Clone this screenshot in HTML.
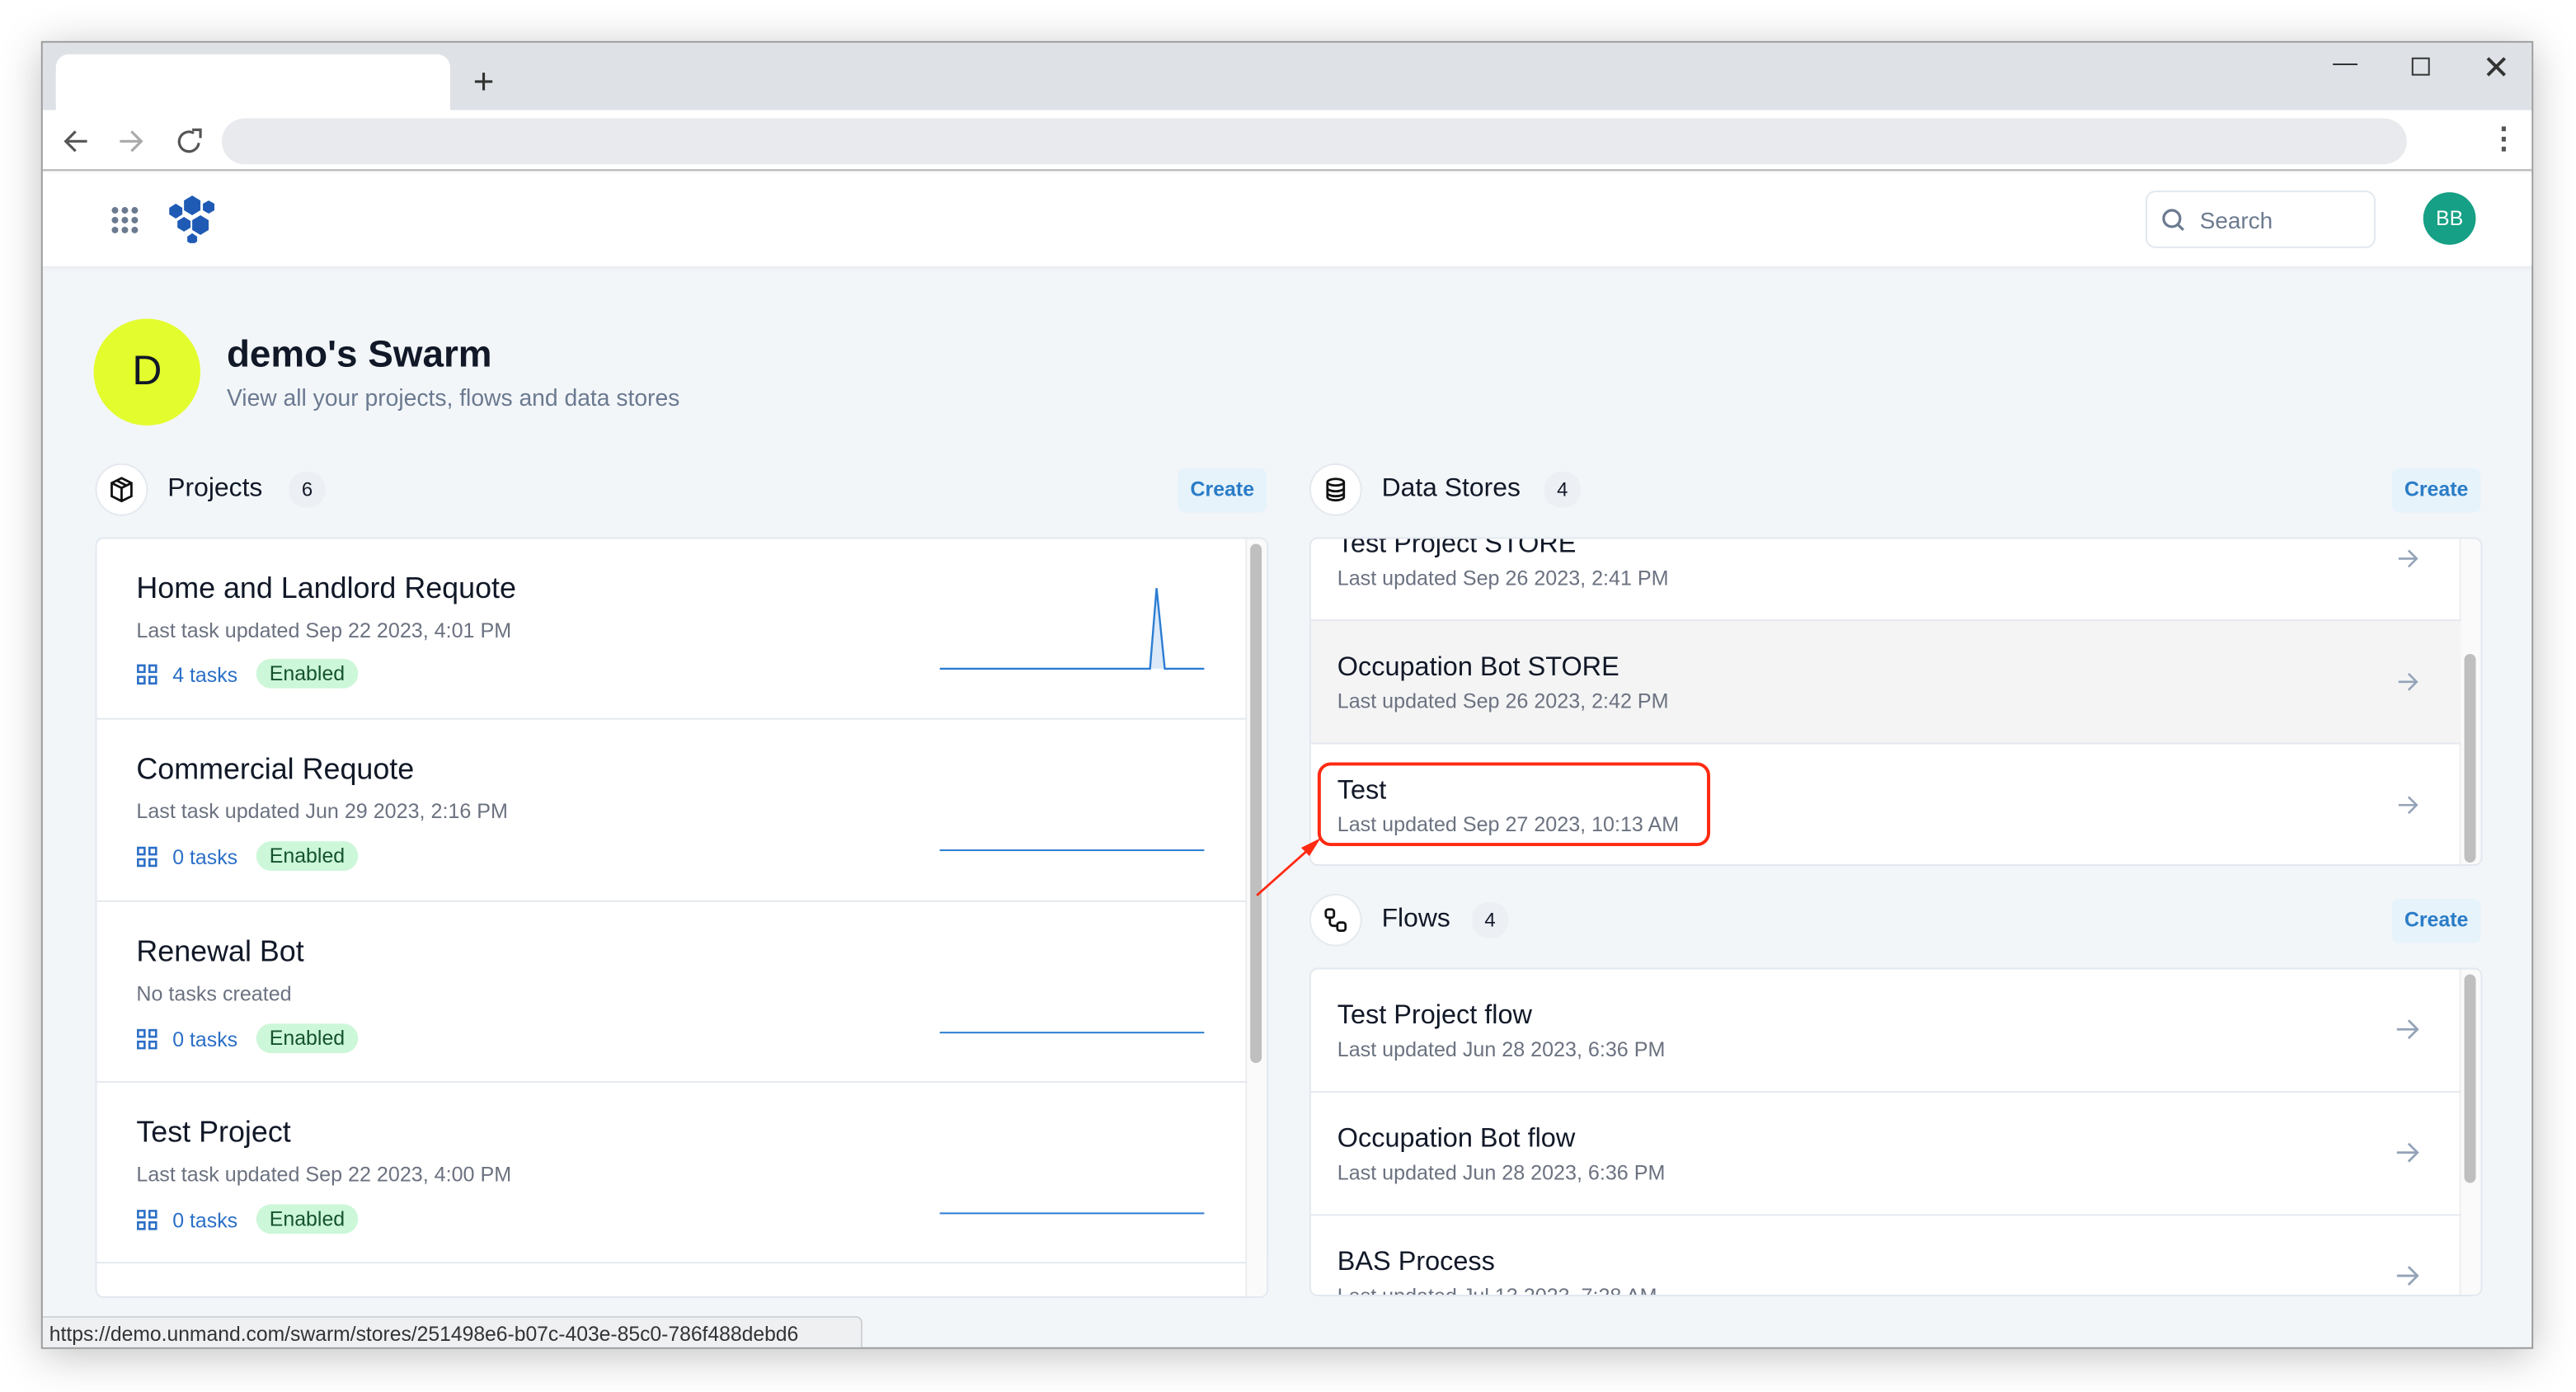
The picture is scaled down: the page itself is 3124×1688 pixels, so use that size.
<!DOCTYPE html>
<html><head><meta charset="utf-8"><style>
*{box-sizing:border-box;margin:0;padding:0}
html,body{width:3124px;height:1688px;overflow:hidden;background:#fff}
#s{position:absolute;left:0;top:0;width:1568px;height:847px;transform:scale(1.99235);transform-origin:0 0;font-family:"Liberation Sans",sans-serif;color:#111827}
.a{position:absolute}
.win{left:25px;top:25px;width:1517px;height:796px;background:#f3f6f9;box-shadow:0 4px 24px rgba(0,0,0,.25);border:1px solid #9a9a9a;overflow:hidden}
.card{background:#fff;border:1px solid #e2e8f0;border-radius:5px;overflow:hidden}
.row{position:absolute;left:0;border-bottom:1.5px solid #e5e9ef}
.t{position:absolute;left:24px;font-size:18px;color:#111827}
.st{position:absolute;left:24px;font-size:12.6px;color:#6b7280}
.badge{position:absolute;background:#cdf7d9;color:#14532d;font-size:12.5px;border-radius:9px;padding:2px 8px}
.tasks{position:absolute;left:24px;font-size:12.5px;color:#2b6fc7}
.sb{position:absolute;width:7px;background:#bfbfbf;border-radius:4px}
.hd{font-size:16px}
.cnt{position:absolute;background:#eceff3;border-radius:10px;width:22px;height:22px;font-size:12px;text-align:center;line-height:22px}
.ic{position:absolute;width:32px;height:32px;border-radius:50%;background:#fff;border:1px solid #e5e9ef}
.cr{position:absolute;background:#e6f3fb;color:#2b7cc7;font-size:12.5px;font-weight:bold;border-radius:4px;width:54px;height:27px;text-align:center;line-height:27px}
.arr{position:absolute;right:25px}
</style></head><body><div id="s">
<div class="a win">
 <div class="a" style="left:0;top:0;width:1517px;height:41px;background:#dee1e6"></div>
 <div class="a" style="left:8px;top:7px;width:240px;height:34px;background:#fff;border-radius:8px 8px 0 0"></div>
 <div class="a" style="left:262px;top:11px;font-size:22px;color:#333">+</div>
 <div class="a" style="left:1394px;top:4px;font-size:15px;color:#333">&#8212;</div>
 <div class="a" style="left:1442px;top:9px;width:11px;height:11px;border:1.5px solid #333"></div>
 <div class="a" style="left:1485px;top:3px;font-size:20px;color:#333">&#x2715;</div>
 <div class="a" style="left:0;top:41px;width:1517px;height:37px;background:#fff;border-bottom:1px solid #b5b5b5"></div>
 <svg class="a" style="left:12px;top:50px" width="100" height="20" viewBox="0 0 100 20"><path d="M15 10H3M8 4L2 10l6 6" stroke="#555" stroke-width="1.6" fill="none"/><path d="M35 10h12M42 4l6 6-6 6" stroke="#aaa" stroke-width="1.6" fill="none"/><path d="M80 5a6 6 0 1 0 3 6" stroke="#555" stroke-width="1.6" fill="none"/><path d="M79 3h5v5" stroke="#555" stroke-width="1.6" fill="none"/></svg>
 <div class="a" style="left:109px;top:46px;width:1330px;height:28px;background:#e8eaed;border-radius:14px"></div>
 <div class="a" style="left:1489px;top:48px;font-size:18px;color:#555;font-weight:bold">&#8942;</div>
 <div class="a" style="left:0;top:79px;width:1517px;height:57px;background:#fff;box-shadow:0 1px 3px rgba(0,0,0,.06)"></div>
 <svg class="a" style="left:41px;top:99px" width="18" height="18"><g fill="#6b7a90"><circle cx="3" cy="3" r="2"/><circle cx="9" cy="3" r="2"/><circle cx="15" cy="3" r="2"/><circle cx="3" cy="9" r="2"/><circle cx="9" cy="9" r="2"/><circle cx="15" cy="9" r="2"/><circle cx="3" cy="15" r="2"/><circle cx="9" cy="15" r="2"/><circle cx="15" cy="15" r="2"/></g></svg>
 <svg class="a" style="left:76px;top:92px" width="30" height="30" viewBox="0 0 30 30"><g fill="#1f5bb5"><path d="M15 1l5 3v6l-5 3-5-3V4z"/><path d="M5 6l4 2.5v4L5 15 1 12.5v-4z"/><path d="M25 4l3.5 2v4L25 12l-3.5-2V6z"/><path d="M20 13l5 3v6l-5 3-5-3v-6z"/><path d="M10 14l4 2.5v4L10 23l-4-2.5v-4z"/><path d="M15 24l3 2v3l-3 2-3-2v-3z"/></g></svg>
 <div class="a" style="left:1280px;top:90px;width:140px;height:35px;border:1px solid #e2e8f0;border-radius:6px"></div>
 <svg class="a" style="left:1289px;top:100px" width="16" height="16"><circle cx="7" cy="7" r="5" stroke="#6b7a90" stroke-width="1.6" fill="none"/><path d="M11 11l3 3" stroke="#6b7a90" stroke-width="1.6"/></svg>
 <div class="a" style="left:1313px;top:100px;font-size:14px;color:#6b7a90">Search</div>
 <div class="a" style="left:1449px;top:91px;width:32px;height:32px;border-radius:50%;background:#16a085;color:#fff;font-size:12.5px;text-align:center;line-height:32px">BB</div>

 <div class="a" style="left:31px;top:168px;width:65px;height:65px;border-radius:50%;background:#e3fc2e;font-size:25px;text-align:center;line-height:65px">D</div>
 <div class="a" style="left:112px;top:176px;font-size:23px;font-weight:bold;color:#111827">demo's Swarm</div>
 <div class="a" style="left:112px;top:209px;font-size:14.2px;color:#6b7a90">View all your projects, flows and data stores</div>

 <!-- Projects -->
 <div class="ic" style="left:32px;top:256px"></div>
 <svg class="a" style="left:40px;top:264px" width="16" height="16" viewBox="0 0 16 16"><path d="M8 1l6 3v8l-6 3-6-3V4z M2 4l6 3 6-3 M8 7v8 M5 2.5l6 3" stroke="#111" stroke-width="1.4" fill="none"/></svg>
 <div class="a hd" style="left:76px;top:263px">Projects</div>
 <div class="cnt" style="left:150px;top:261px">6</div>
 <div class="cr" style="left:691px;top:259px">Create</div>
 <div class="a card" style="left:32px;top:301px;width:714px;height:463px">
  <div class="a" style="right:0;top:0;width:13px;height:463px;background:#fafafa;border-left:1px solid #eee"></div>
  <div class="sb" style="right:3px;top:3px;height:316px"></div>
  <div class="row" style="top:0;width:700px;height:110px">
   <div class="t" style="top:20px">Home and Landlord Requote</div>
   <div class="st" style="top:49px">Last task updated Sep 22 2023, 4:01 PM</div>
   <svg class="a" style="left:24px;top:76px" width="13" height="13"><path d="M1 1h4v4H1zM8 1h4v4H8zM1 8h4v4H1zM8 8h4v4H8z" stroke="#2b6fc7" stroke-width="1.3" fill="none"/></svg>
   <div class="tasks" style="left:46px;top:76px">4 tasks</div>
   <div class="badge" style="left:97px;top:73px">Enabled</div>
   <svg class="a" style="left:513px;top:25px" width="162" height="60"><path d="M0 54H128L132 5L137 54H161" stroke="none" fill="#dbe9f8"/><path d="M0 54H128L132 5L137 54H161" stroke="#2b7cd3" stroke-width="1.2" fill="none"/></svg>
  </div>
  <div class="row" style="top:110px;width:700px;height:111px">
   <div class="t" style="top:20px">Commercial Requote</div>
   <div class="st" style="top:49px">Last task updated Jun 29 2023, 2:16 PM</div>
   <svg class="a" style="left:24px;top:77px" width="13" height="13"><path d="M1 1h4v4H1zM8 1h4v4H8zM1 8h4v4H1zM8 8h4v4H8z" stroke="#2b6fc7" stroke-width="1.3" fill="none"/></svg>
   <div class="tasks" style="left:46px;top:77px">0 tasks</div>
   <div class="badge" style="left:97px;top:74px">Enabled</div>
   <div class="a" style="left:513px;top:79px;width:161px;height:1.3px;background:#2b7cd3"></div>
  </div>
  <div class="row" style="top:221px;width:700px;height:110px">
   <div class="t" style="top:20px">Renewal Bot</div>
   <div class="st" style="top:49px">No tasks created</div>
   <svg class="a" style="left:24px;top:77px" width="13" height="13"><path d="M1 1h4v4H1zM8 1h4v4H8zM1 8h4v4H1zM8 8h4v4H8z" stroke="#2b6fc7" stroke-width="1.3" fill="none"/></svg>
   <div class="tasks" style="left:46px;top:77px">0 tasks</div>
   <div class="badge" style="left:97px;top:74px">Enabled</div>
   <div class="a" style="left:513px;top:79px;width:161px;height:1.3px;background:#2b7cd3"></div>
  </div>
  <div class="row" style="top:331px;width:700px;height:110px">
   <div class="t" style="top:20px">Test Project</div>
   <div class="st" style="top:49px">Last task updated Sep 22 2023, 4:00 PM</div>
   <svg class="a" style="left:24px;top:77px" width="13" height="13"><path d="M1 1h4v4H1zM8 1h4v4H8zM1 8h4v4H1zM8 8h4v4H8z" stroke="#2b6fc7" stroke-width="1.3" fill="none"/></svg>
   <div class="tasks" style="left:46px;top:77px">0 tasks</div>
   <div class="badge" style="left:97px;top:74px">Enabled</div>
   <div class="a" style="left:513px;top:79px;width:161px;height:1.3px;background:#2b7cd3"></div>
  </div>
 </div>

 <!-- Data stores -->
 <div class="ic" style="left:771px;top:256px"></div>
 <svg class="a" style="left:779px;top:264px" width="16" height="16" viewBox="0 0 16 16"><ellipse cx="8" cy="3.5" rx="5" ry="2" stroke="#111" stroke-width="1.4" fill="none"/><path d="M3 3.5v9c0 1.1 2.2 2 5 2s5-.9 5-2v-9M3 7c0 1.1 2.2 2 5 2s5-.9 5-2M3 10c0 1.1 2.2 2 5 2s5-.9 5-2" stroke="#111" stroke-width="1.4" fill="none"/></svg>
 <div class="a hd" style="left:815px;top:263px">Data Stores</div>
 <div class="cnt" style="left:914px;top:261px">4</div>
 <div class="cr" style="left:1430px;top:259px">Create</div>
 <div class="a card" style="left:771px;top:301px;width:714px;height:200px">
  <div class="a" style="right:0;top:0;width:13px;height:200px;background:#fafafa;border-left:1px solid #eee"></div>
  <div class="sb" style="right:3px;top:70px;height:127px"></div>
  <div class="row" style="top:0;width:700px;height:50px">
   <div class="t" style="left:16px;top:-6px;font-size:16.3px">Test Project STORE</div>
   <div class="st" style="left:16px;top:17px">Last updated Sep 26 2023, 2:41 PM</div>
   <svg class="arr" style="top:5px" width="14" height="14"><path d="M1 7h11M7 2l5 5-5 5" stroke="#94a3b8" stroke-width="1.3" fill="none"/></svg>
  </div>
  <div class="row" style="top:50px;width:700px;height:75px;background:#f4f4f5">
   <div class="t" style="left:16px;top:19px;font-size:16.3px">Occupation Bot STORE</div>
   <div class="st" style="left:16px;top:42px">Last updated Sep 26 2023, 2:42 PM</div>
   <svg class="arr" style="top:30px" width="14" height="14"><path d="M1 7h11M7 2l5 5-5 5" stroke="#94a3b8" stroke-width="1.3" fill="none"/></svg>
  </div>
  <div class="row" style="top:125px;width:700px;height:75px;border:0">
   <div class="t" style="left:16px;top:19px;font-size:16.3px">Test</div>
   <div class="st" style="left:16px;top:42px">Last updated Sep 27 2023, 10:13 AM</div>
   <svg class="arr" style="top:30px" width="14" height="14"><path d="M1 7h11M7 2l5 5-5 5" stroke="#94a3b8" stroke-width="1.3" fill="none"/></svg>
  </div>
 </div>
 <div class="a" style="left:776px;top:438px;width:239px;height:51px;border:2px solid #ff2a12;border-radius:8px"></div>
 <svg class="a" style="left:730px;top:480px" width="60" height="50"><path d="M9 39L45 7" stroke="#ff2a12" stroke-width="1.4"/><path d="M48 4L36 10l5 5z" fill="#ff2a12"/></svg>

 <!-- Flows -->
 <div class="ic" style="left:771px;top:518px"></div>
 <svg class="a" style="left:779px;top:526px" width="16" height="16" viewBox="0 0 16 16"><rect x="2" y="1.5" width="5" height="5" rx="1.5" stroke="#111" stroke-width="1.4" fill="none"/><rect x="9" y="9.5" width="5" height="5" rx="1.5" stroke="#111" stroke-width="1.4" fill="none"/><path d="M4.5 6.5v3a2 2 0 0 0 2 2H9" stroke="#111" stroke-width="1.4" fill="none"/></svg>
 <div class="a hd" style="left:815px;top:525px">Flows</div>
 <div class="cnt" style="left:870px;top:523px">4</div>
 <div class="cr" style="left:1430px;top:521px">Create</div>
 <div class="a card" style="left:771px;top:563px;width:714px;height:200px">
  <div class="a" style="right:0;top:0;width:13px;height:201px;background:#fafafa;border-left:1px solid #eee"></div>
  <div class="sb" style="right:3px;top:3px;height:127px"></div>
  <div class="row" style="top:0;width:700px;height:75px">
   <div class="t" style="left:16px;top:19px;font-size:16.3px">Test Project flow</div>
   <div class="st" style="left:16px;top:42px">Last updated Jun 28 2023, 6:36 PM</div>
   <svg class="arr" style="top:29px" width="15" height="15"><path d="M1 7.5h12M8 2l5.5 5.5L8 13" stroke="#94a3b8" stroke-width="1.4" fill="none"/></svg>
  </div>
  <div class="row" style="top:75px;width:700px;height:75px">
   <div class="t" style="left:16px;top:19px;font-size:16.3px">Occupation Bot flow</div>
   <div class="st" style="left:16px;top:42px">Last updated Jun 28 2023, 6:36 PM</div>
   <svg class="arr" style="top:29px" width="15" height="15"><path d="M1 7.5h12M8 2l5.5 5.5L8 13" stroke="#94a3b8" stroke-width="1.4" fill="none"/></svg>
  </div>
  <div class="row" style="top:150px;width:700px;height:75px;border:0">
   <div class="t" style="left:16px;top:19px;font-size:16.3px">BAS Process</div>
   <div class="st" style="left:16px;top:42px">Last updated Jul 13 2023, 7:28 AM</div>
   <svg class="arr" style="top:29px" width="15" height="15"><path d="M1 7.5h12M8 2l5.5 5.5L8 13" stroke="#94a3b8" stroke-width="1.4" fill="none"/></svg>
  </div>
 </div>

 <div class="a" style="left:0;top:775px;width:499px;height:21px;background:#eef0f2;border:1px solid #d0d3d6;border-left:0;border-bottom:0;border-radius:0 4px 0 0;font-size:12.4px;color:#333;padding:3px 0 0 4px">https://demo.unmand.com/swarm/stores/251498e6-b07c-403e-85c0-786f488debd6</div>
</div>
</div></body></html>
